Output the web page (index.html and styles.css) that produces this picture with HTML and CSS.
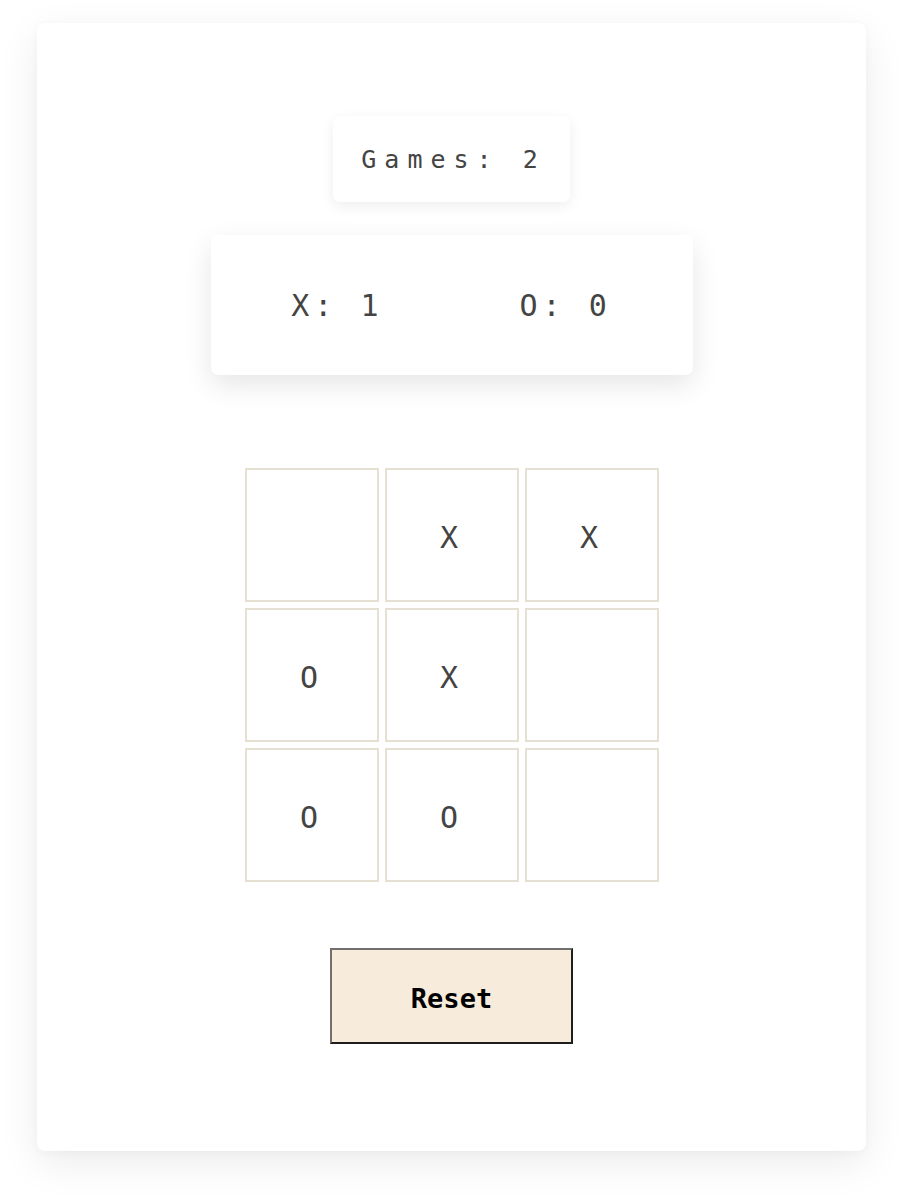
FILE: index.html
```html
<!DOCTYPE html>
<html lang="en">
<head>
<meta charset="utf-8">
<title>Tic Tac Toe</title>
<link rel="stylesheet" href="styles.css">
</head>
<body>
<main class="card">
  <div class="games">Games: 2</div>
  <div class="scores">
    <span class="score">X: 1</span>
    <span class="score">O: 0</span>
  </div>
  <div class="board">
    <div class="cell"></div>
    <div class="cell">X</div>
    <div class="cell">X</div>
    <div class="cell">O</div>
    <div class="cell">X</div>
    <div class="cell"></div>
    <div class="cell">O</div>
    <div class="cell">O</div>
    <div class="cell"></div>
  </div>
  <button class="reset" type="button">Reset</button>
</main>
</body>
</html>
```
FILE: styles.css
```css
html, body {
  margin: 0;
  padding: 0;
  background: #ffffff;
}
body {
  font-family: "DejaVu Sans Mono", "Liberation Mono", monospace;
  color: #444444;
  padding: 23px 0 48px 37px;
}
.card {
  width: 829px;
  height: 1128px;
  box-sizing: border-box;
  background: #ffffff;
  border-radius: 8px;
  box-shadow: 0 12px 40px rgba(0, 0, 0, 0.08), 0 2px 8px rgba(0, 0, 0, 0.03);
  display: flex;
  flex-direction: column;
  align-items: center;
  padding-top: 93px;
}
.games {
  width: 237px;
  height: 86px;
  box-sizing: border-box;
  display: flex;
  align-items: center;
  justify-content: center;
  padding-left: 4px;
  background: #fff;
  border-radius: 7px;
  box-shadow: 0 4px 14px rgba(0, 0, 0, 0.07);
  font-size: 25px;
  letter-spacing: 8px;
}
.scores {
  margin-top: 33px;
  width: 482px;
  height: 140px;
  box-sizing: border-box;
  display: flex;
  align-items: center;
  justify-content: center;
  gap: 136px;
  padding-left: 0;
  background: #fff;
  border-radius: 7px;
  box-shadow: 0 10px 28px rgba(0, 0, 0, 0.1);
  font-size: 30px;
  letter-spacing: 5px;
}
.board {
  margin-top: 93px;
  display: grid;
  grid-template-columns: repeat(3, 134px);
  grid-auto-rows: 134px;
  gap: 6px;
}
.cell {
  box-sizing: border-box;
  border: 2px solid #e6e0d3;
  display: flex;
  align-items: center;
  justify-content: center;
  font-size: 30px;
  color: #444;
  padding: 4px 5px 0 0;
}
.reset {
  margin-top: 66px;
  width: 243px;
  height: 96px;
  box-sizing: border-box;
  background: #f7ebdb;
  border: 2px solid;
  border-color: #707070 #1e1e1e #1e1e1e #707070;
  font-family: "DejaVu Sans Mono", "Liberation Mono", monospace;
  font-weight: bold;
  font-size: 27px;
  color: #000;
  padding: 4px 0 0 0;
}
```
